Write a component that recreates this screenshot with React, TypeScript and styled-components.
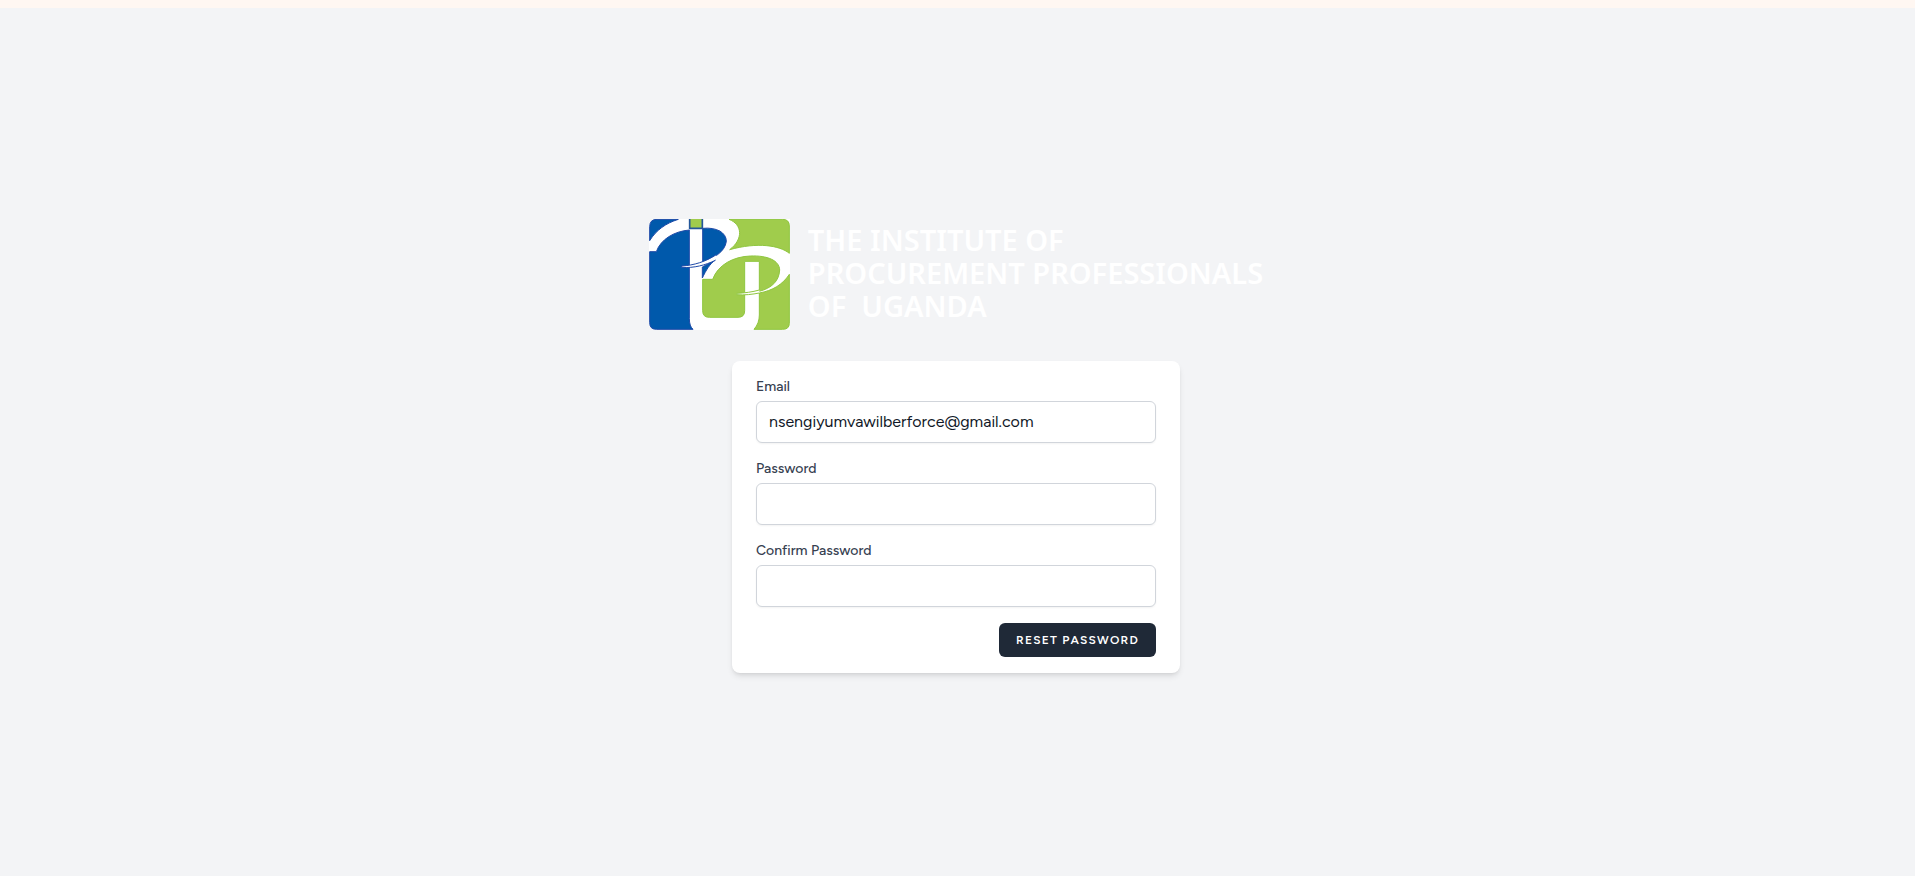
import React, { useState } from 'react';
import styled, { createGlobalStyle } from 'styled-components';

const GlobalStyle = createGlobalStyle`
  *, *::before, *::after { box-sizing: border-box; }
  body {
    margin: 0;
    background: #f3f4f6;
    color: #111827;
    font-family: Figtree, Inter, "Liberation Sans", sans-serif;
    font-size: 16px;
    line-height: 24px;
  }
`;

const TopStrip = styled.div`
  height: 8px;
  background: #fff7f2;
`;

const Page = styled.main`
  min-height: calc(100vh - 8px);
  display: flex;
  flex-direction: column;
  align-items: center;
  justify-content: center;
  gap: 31px;
  padding: 8px 3px 0 0;
`;

const Brand = styled.a`
  display: flex;
  align-items: center;
  gap: 18px;
  color: #ffffff;
  text-decoration: none;
`;

const Mark = styled.svg`
  display: block;
  flex: none;
  width: 141px;
  height: 111px;
`;

const BrandName = styled.span`
  padding-bottom: 5px;
  font-family: "Noto Sans", "Open Sans", sans-serif;
  font-size: 29px;
  font-weight: 600;
  line-height: 33px;
  white-space: pre;
`;

const Card = styled.form`
  width: 100%;
  max-width: 448px;
  display: flex;
  flex-direction: column;
  gap: 16px;
  padding: 16px 24px;
  background: #ffffff;
  border-radius: 8px;
  box-shadow: 0 4px 6px -1px rgba(0, 0, 0, 0.1), 0 2px 4px -2px rgba(0, 0, 0, 0.1);
`;

const Field = styled.div`
  display: flex;
  flex-direction: column;
  gap: 4px;
`;

const Label = styled.label`
  color: #374151;
  font-size: 14px;
  font-weight: 500;
  line-height: 20px;
`;

const Input = styled.input`
  width: 100%;
  height: 42px;
  padding: 7px 12px 9px;
  border: 1px solid #d1d5db;
  border-radius: 6px;
  background: #ffffff;
  box-shadow: 0 1px 2px rgba(0, 0, 0, 0.05);
  color: #111827;
  font: inherit;
  &:focus {
    outline: none;
    border-color: #6366f1;
  }
`;

const Actions = styled.div`
  display: flex;
  justify-content: flex-end;
`;

const SubmitButton = styled.button`
  padding: 8px 16px;
  border: 1px solid transparent;
  border-radius: 6px;
  background: #1f2937;
  color: #ffffff;
  font-family: inherit;
  font-size: 12px;
  font-weight: 600;
  line-height: 16px;
  letter-spacing: 0.1em;
  text-transform: uppercase;
  cursor: pointer;
`;

function LogoMark() {
  return (
    <Mark viewBox="30 27 423 333" preserveAspectRatio="none" aria-hidden="true">
      <path fill="#fff" d="M30 48Q30 27 52 27H453V360H52Q30 360 30 338Z" />
      <g fill="#0059ab" stroke="#1f4aa8" strokeWidth="3">
        <path d="M32 92V50Q32 28 54 28H118C80 40 52 60 32 92Z" />
        <path d="M32 125H52C65 88 105 64 151 60V325Q151 349 162 358H52Q32 358 32 338Z" />
        <path d="M191 55C232 51 262 67 262 94C258 127 221 146 191 155Z" />
        <path d="M190 171L229 150C212 162 201 181 190 204Z" />
      </g>
      <g fill="#a0cc4c" stroke="#8fc63f" strokeWidth="3">
        <path d="M270 28H431Q451 28 451 48V130C422 106 355 96 272 119C314 87 310 43 270 28Z" />
        <path d="M191 208H221C237 164 283 140 334 138C385 136 421 151 422 180C420 214 398 234 361 244V154H317V247L294 252L317 253V302Q317 322 297 322H211Q191 322 191 302Z" />
        <path d="M361 249C400 242 431 224 451 193V340Q451 358 431 358H345Q361 340 361 315Z" />
      </g>
      <path fill="#a0cc4c" stroke="#24579a" strokeWidth="5" d="M152 27V55H190V27" />
      <path fill="#fff" stroke="#1f4aa8" strokeWidth="3" d="M232 134C200 155 165 166 128 168V172C165 175 200 165 229 151" />
      <path fill="#fff" stroke="#8fc63f" strokeWidth="3" d="M361 240C340 246 318 249 293 250V254C318 256 340 253 361 249" />
    </Mark>
  );
}

export default function App() {
  const [email, setEmail] = useState('nsengiyumvawilberforce@gmail.com');
  return (
    <>
      <GlobalStyle />
      <TopStrip />
      <Page>
        <Brand href="/">
          <LogoMark />
          <BrandName>{'THE INSTITUTE OF\nPROCUREMENT PROFESSIONALS\nOF  UGANDA'}</BrandName>
        </Brand>
        <Card onSubmit={(e) => e.preventDefault()}>
          <Field>
            <Label htmlFor="email">Email</Label>
            <Input id="email" type="email" value={email} onChange={(e) => setEmail(e.target.value)} />
          </Field>
          <Field>
            <Label htmlFor="password">Password</Label>
            <Input id="password" type="password" autoComplete="new-password" />
          </Field>
          <Field>
            <Label htmlFor="confirm">Confirm Password</Label>
            <Input id="confirm" type="password" autoComplete="new-password" />
          </Field>
          <Actions>
            <SubmitButton type="submit">Reset Password</SubmitButton>
          </Actions>
        </Card>
      </Page>
    </>
  );
}
